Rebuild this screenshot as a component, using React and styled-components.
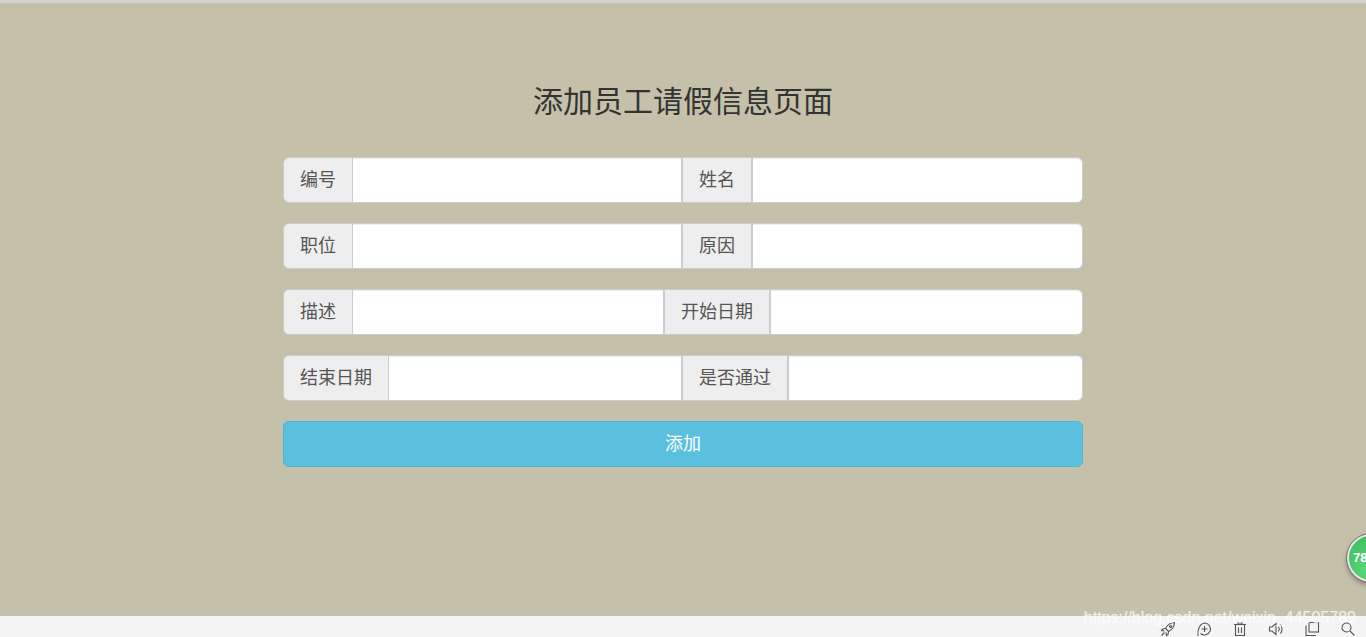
import React from 'react';
import styled, { createGlobalStyle } from 'styled-components';

const GlobalStyle = createGlobalStyle`
  html, body {
    margin: 0;
    padding: 0;
    height: 100%;
    overflow: hidden;
  }
  body {
    font-family: "Liberation Sans", "Noto Sans CJK SC", sans-serif;
  }
`;

const Page = styled.div`
  position: relative;
  height: 637px;
  display: flex;
  flex-direction: column;
  overflow: hidden;
`;

const Content = styled.main`
  flex: 1;
  background: #c5c0aa;
  border-top: 3px solid #d3d3d3;
  display: flex;
  flex-direction: column;
  align-items: center;
  padding-top: 78px;
`;

const Title = styled.h2`
  margin: 0 0 34px;
  font-size: 30px;
  font-weight: 400;
  line-height: 42px;
  color: #333;
`;

const Form = styled.form`
  width: 800px;
  display: flex;
  flex-direction: column;
  gap: 20px;
`;

const InputGroup = styled.div`
  display: flex;
  height: 46px;
`;

const Addon = styled.span`
  flex: none;
  padding: 0 16px 4px;
  display: flex;
  align-items: center;
  font-size: 18px;
  color: #555;
  background: #eee;
  border: 1px solid #ccc;
  border-right-width: ${(p) => (p.$first ? '0' : '1px')};
  border-radius: ${(p) => (p.$first ? '6px 0 0 6px' : '0')};
`;

const Field = styled.input`
  flex: 1 1 ${(p) => (p.$last ? '35px' : '34px')};
  min-width: 0;
  box-sizing: border-box;
  height: 46px;
  padding: 10px 16px;
  font-size: 18px;
  color: #555;
  background: #fff;
  border: 1px solid #ccc;
  border-radius: ${(p) => (p.$last ? '0 6px 6px 0' : '0')};
  box-shadow: inset 0 1px 1px rgba(0, 0, 0, 0.075);
  outline: none;
`;

const SubmitButton = styled.button`
  height: 46px;
  padding: 0 0 4px;
  font-family: inherit;
  font-size: 18px;
  color: #fff;
  background: #5bc0de;
  border: 1px solid #46b8da;
  border-radius: 6px;
`;

const BottomBar = styled.footer`
  flex: none;
  box-sizing: border-box;
  height: 21px;
  background: #f4f4f5;
  display: flex;
  align-items: center;
  justify-content: flex-end;
  padding: 4px 10px 0 0;
  gap: 20px;
  color: #555;
`;

const BarIcon = styled.svg`
  width: 16px;
  height: 16px;
  fill: none;
  stroke: currentColor;
  stroke-width: 1.1;
`;

const Watermark = styled.div`
  position: absolute;
  right: 10px;
  top: 608px;
  font-size: 16px;
  line-height: 20px;
  color: rgba(255, 255, 255, 0.6);
  text-shadow: 0 0 1px rgba(255, 255, 255, 0.5);
  white-space: nowrap;
`;

const Badge = styled.div`
  position: absolute;
  left: 1347px;
  top: 534px;
  width: 48px;
  height: 48px;
  box-sizing: border-box;
  border-radius: 50%;
  border: 2px solid #e6e6e6;
  outline: 1px solid #777;
  background: radial-gradient(circle at 50% 75%, #5bdc7c, #3bb85b);
  box-shadow: 0 3px 5px rgba(0, 0, 0, 0.35);
  color: #fff;
  font: 700 13px/44px "Liberation Sans", sans-serif;
  padding-left: 4px;
`;

const rows = [
  ['编号', '姓名'],
  ['职位', '原因'],
  ['描述', '开始日期'],
  ['结束日期', '是否通过'],
];

export default function App() {
  return (
    <Page>
      <GlobalStyle />
      <Content>
        <Title>添加员工请假信息页面</Title>
        <Form onSubmit={(e) => e.preventDefault()}>
          {rows.map(([left, right]) => (
            <InputGroup key={left}>
              <Addon $first>{left}</Addon>
              <Field type="text" />
              <Addon>{right}</Addon>
              <Field type="text" $last />
            </InputGroup>
          ))}
          <SubmitButton type="submit">添加</SubmitButton>
        </Form>
      </Content>
      <BottomBar>
        <BarIcon viewBox="0 0 16 16" strokeWidth="1.3">
          <path d="M14.500 1.500C11 1.700 7.500 3.500 5.500 7.500L8.500 10.500C12.500 8.500 14.300 5 14.500 1.500Z" />
          <path d="M5.500 7.500 2.500 8l-1 1.500 3 .5M8.500 10.500 8 13.500l-1.500 1-.5-3M4.500 11.500 1.500 14.500" />
          <circle cx="10.500" cy="5.500" r="1" />
        </BarIcon>
        <BarIcon viewBox="0 0 16 16">
          <path d="M2 15C1 9 4 2 9 2A6 6 0 1 1 4.500 12.500" />
          <path d="M8.500 5v6M5.500 8h6" />
        </BarIcon>
        <BarIcon viewBox="0 0 16 16">
          <path d="M2 3.500h12M6 3.500V2h4v1.500M3.500 3.500V14.500h9V3.500M6.500 6.500v5.500M9.500 6.500v5.500" />
        </BarIcon>
        <BarIcon viewBox="0 0 16 16">
          <path d="M1.500 6H4L8 2.500v11L4 10H1.500Z" />
          <path d="M10.500 5.500c1 1.500 1 3.500 0 5M12.500 3.500c2 2.500 2 6.500 0 9" />
        </BarIcon>
        <BarIcon viewBox="0 0 16 16" strokeWidth="1.3">
          <rect x="5" y="1.500" width="9.500" height="9.500" />
          <path d="M2 4.500V14.500h10" />
        </BarIcon>
        <BarIcon viewBox="0 0 16 16" strokeWidth="1.3">
          <circle cx="6.500" cy="6.500" r="4.500" />
          <path d="M10 10l4.500 4.500" />
        </BarIcon>
      </BottomBar>
      <Watermark>https://blog.csdn.net/weixin_44505789</Watermark>
      <Badge>78</Badge>
    </Page>
  );
}
